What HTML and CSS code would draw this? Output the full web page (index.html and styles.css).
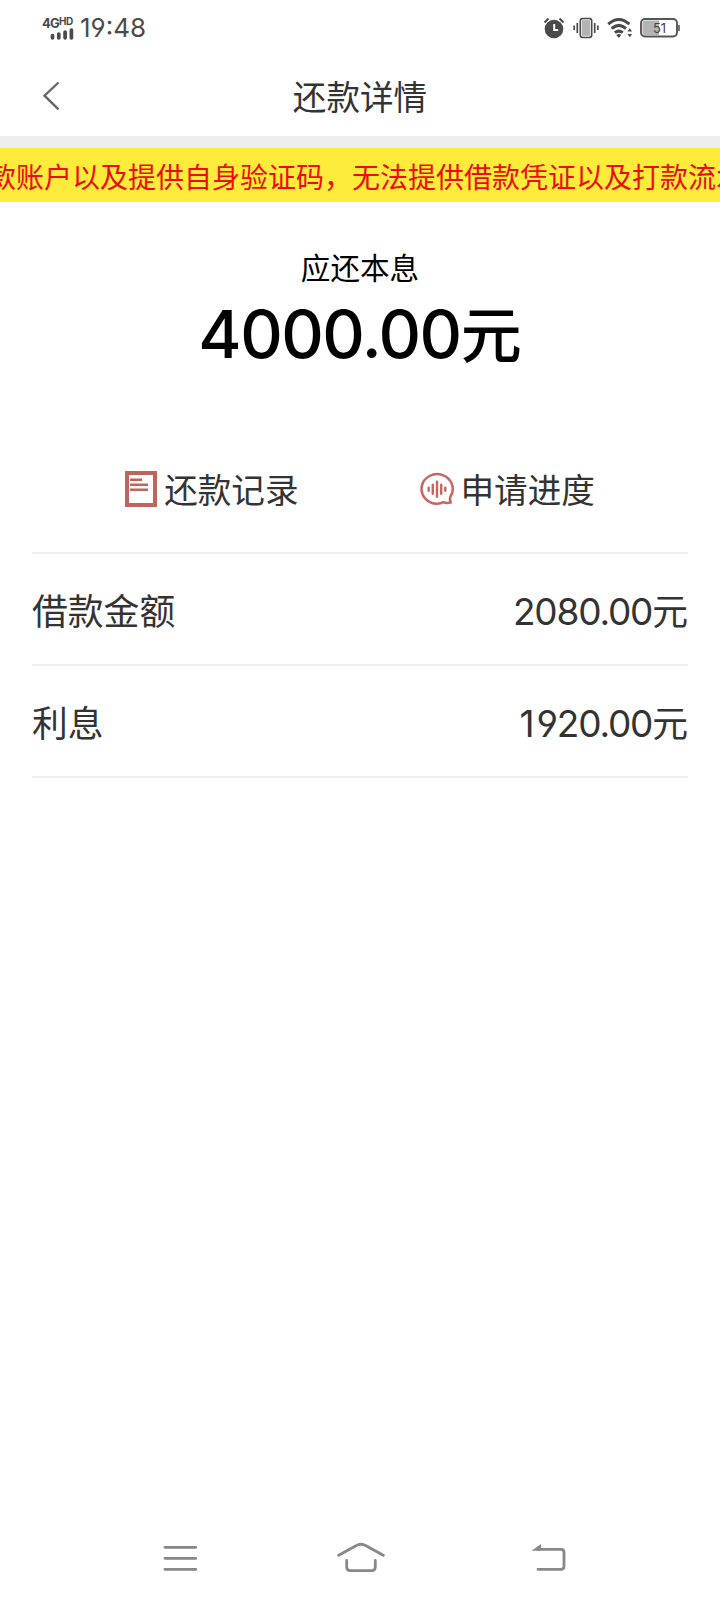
FILE: index.html
```html
<!DOCTYPE html>
<html lang="zh-CN">
  <head>
    <meta charset="UTF-8">
    <meta name="viewport" content="width=device-width, initial-scale=1.0">
    <title>还款详情</title>
    <link rel="stylesheet" href="styles.css">
  </head>
  <body>
    <div class="status-bar">
        <div class="network">
            <div class="network-type">4G<span class="hd">HD</span></div>
            <svg class="signal" width="24" height="12" viewBox="0 0 24 12">
                <path d="M2.500 7.500v2.300M8.800 6v3.800M15.100 4v5.800M21.400 2v7.800" stroke="#4a4a4a" stroke-width="3.700" stroke-linecap="round"/>
            </svg>
        </div>
        <div class="time">19:48</div>
        <div class="status-icons">
            <svg class="alarm" width="22" height="22" viewBox="0 0 22 22">
                <circle cx="11" cy="12" r="9.300" fill="#4a4a4a"/>
                <path d="M1.500 5.500l4-4M20.500 5.500l-4-4" stroke="#4a4a4a" stroke-width="2"/>
                <path d="M11.200 7v6h4" fill="none" stroke="#fff" stroke-width="2"/>
            </svg>
            <svg class="vibrate" width="26" height="22" viewBox="0 0 26 22">
                <rect x="7.500" y="1.700" width="11" height="18.600" rx="2" fill="#b3b3b3" stroke="#4a4a4a" stroke-width="2"/>
                <rect x="8.500" y="2.700" width="9" height="16.600" rx="1" fill="none" stroke="#fff" stroke-width=".8"/>
                <path d="M1.200 8.500v4.500M4.300 6v10M21.700 6v10M24.800 8.500v4.500" stroke="#4a4a4a" stroke-width="1.700"/>
            </svg>
            <svg class="wifi" width="26" height="22" viewBox="0 0 26 22">
                <g fill="none" stroke="#4a4a4a" stroke-width="3">
                    <path d="M1.200 7.200q10.600-9.400 21.200 0"/>
                    <path d="M4.600 11.500q7.200-6.200 14.400 0"/>
                    <path d="M7.900 15.700q3.900-3.200 7.800 0"/>
                </g>
                <path d="M9.300 18q2.500-1.800 5 0L11.800 21z" fill="#4a4a4a"/>
                <path d="M20.500 14.500l2.300-3.200 2.300 3.200zM20.500 17l2.300 3.200 2.300-3.200z" fill="#4a4a4a"/>
            </svg>
            <svg class="battery" width="40" height="22" viewBox="0 0 40 22">
                <rect x="1" y="2" width="36" height="17.500" rx="4" fill="#fff" stroke="#555" stroke-width="1.900"/>
                <path d="M5 3.500h14v14.500H5q-2.500 0-2.500-2.500V6q0-2.500 2.500-2.500z" fill="#b3b3b3"/>
                <path d="M39 8v6" stroke="#555" stroke-width="1.600"/>
                <text class="battery-level" x="19.500" y="15.500" text-anchor="middle">51</text>
            </svg>
        </div>
    </div>

    <div class="header">
        <svg class="back" width="20" height="32" viewBox="0 0 20 32">
            <path d="M16.500 2.500L2.500 15.700 16.500 29.300" fill="none" stroke="#666" stroke-width="2.400"/>
        </svg>
        <h1>还款详情</h1>
    </div>

    <div class="notice">
        <div class="notice-text">款账户以及提供自身验证码，无法提供借款凭证以及打款流水</div>
    </div>

    <div class="summary">
        <div class="summary-label">应还本息</div>
        <div class="summary-amount"><span class="num">4000.00</span>元</div>
    </div>

    <div class="actions">
        <div class="action">
            <svg class="record-icon" width="32" height="36" viewBox="0 0 32 36">
                <rect x="2" y="2" width="28" height="32" fill="none" stroke="#c4625c" stroke-width="4"/>
                <path d="M5 8.700h12M5 13.700h18M5 18.700h18" stroke="#c4625c" stroke-width="2.600"/>
            </svg>
            <span>还款记录</span>
        </div>
        <div class="action">
            <svg class="progress-icon" width="34" height="34" viewBox="1 0 34 34">
                <path d="M31.700 30.500Q27 31.500 24.500 30.100 21.500 31.700 18 31.700A15.600 14.800 0 1 1 31.500 24.500Q30.300 26.500 31.700 30.500z" fill="none" stroke="#cc6460" stroke-width="2.500" stroke-linejoin="round"/>
                <path d="M9.700 15.700v3M13.800 12.700v9M18 9.700v15M22.200 12.700v9M26.300 15.700v3" stroke="#cc6460" stroke-width="2.400" stroke-linecap="round"/>
            </svg>
            <span>申请进度</span>
        </div>
    </div>

    <div class="details">
        <div class="detail-row">
            <span>借款金额</span>
            <span><span class="num">2080.00</span>元</span>
        </div>
        <div class="detail-row">
            <span>利息</span>
            <span><span class="num"><span class="one">1</span>920.00</span>元</span>
        </div>
    </div>

    <div class="nav-bar">
        <svg class="nav-menu" width="34" height="34" viewBox="0 0 34 34">
            <path d="M1.900 6.300h31M1.900 17.300h31M1.900 28.300h31" stroke="#888" stroke-width="2.800" stroke-linecap="round"/>
        </svg>
        <svg class="nav-home" width="48" height="34" viewBox="0 0 48 34">
            <g fill="none" stroke="#888" stroke-width="2.800" stroke-linecap="round" stroke-linejoin="round">
                <path d="M1.700 14.300L19 4.700Q24 1.800 29 4.700L46.300 14.300"/>
                <path d="M9.700 19.500v6.500q0 3.700 3.700 3.700h21.200q3.700 0 3.700-3.700v-6.500"/>
            </g>
        </svg>
        <svg class="nav-back" width="36" height="34" viewBox="0 0 36 34">
            <path d="M7 8.300h23q3 0 3 3v14q0 3-3 3H7" fill="none" stroke="#888" stroke-width="2.800" stroke-linecap="round"/>
            <path d="M.500 9.700L10 3v6.700z" fill="#888"/>
        </svg>
    </div>
  </body>
</html>
```

FILE: styles.css
```css
* {
    box-sizing: border-box;
}

body {
    width: 720px;
    height: 1600px;
    margin: 0;
    display: flex;
    flex-direction: column;
    font-family: 'Noto Sans CJK SC', sans-serif;
    background: #fff;
    color: #333;
    overflow: hidden;
}

svg {
    display: block;
    flex-shrink: 0;
}

.num {
    font-family: Inter, 'Noto Sans CJK SC', sans-serif;
    font-feature-settings: "cv03", "cv04";
}

.status-bar {
    height: 56px;
    padding: 0 40px 0 42px;
    display: flex;
    align-items: center;
}

.network {
    width: 32px;
    height: 25px;
    display: flex;
    flex-direction: column;
    align-items: flex-end;
}

.network-type {
    width: 32px;
    height: 12px;
    font: 700 13px/14px Inter, sans-serif;
    letter-spacing: -0.8px;
    color: #4a4a4a;
    display: flex;
}

.hd {
    font-size: 10px;
    line-height: 11px;
    letter-spacing: -0.3px;
}

.time {
    margin-left: 6px;
    font: 400 26px/56px Inter, sans-serif;
    font-feature-settings: "cv04";
    color: #4a4a4a;
}

.status-icons {
    margin-left: auto;
    display: flex;
    align-items: center;
}

.vibrate {
    margin-left: 8px;
}

.wifi {
    margin-left: 8px;
}

.battery {
    margin-left: 7px;
}

.battery-level {
    font: 400 13px Inter, sans-serif;
    fill: #444;
}

.header {
    height: 80px;
    padding: 0 42px;
    display: grid;
    grid-template-columns: 20px 1fr 20px;
    align-items: center;
}

h1 {
    margin: 0;
    font-size: 33.6px;
    line-height: 80px;
    font-weight: 400;
    text-align: center;
}

.notice {
    height: 66px;
    border-top: 12px solid #eee;
    background: #ffeb3b;
    overflow: hidden;
}

.notice-text {
    margin-left: -12px;
    font-size: 28px;
    line-height: 56px;
    white-space: nowrap;
    color: #ee0c00;
}

.summary {
    padding-top: 42px;
    height: 234px;
    text-align: center;
    color: #000;
}

.summary-label {
    font-size: 29.6px;
    line-height: 45px;
}

.summary-amount {
    font-size: 61px;
    line-height: 86px;
    font-weight: 500;
}

.summary-amount .num {
    font-size: 66px;
    font-weight: 500;
    letter-spacing: -1.5px;
}

.actions {
    height: 116px;
    padding-top: 28px;
    display: flex;
    justify-content: center;
    align-items: flex-start;
    gap: 121px;
    font-size: 33.6px;
    line-height: 50px;
}

.action {
    display: flex;
    align-items: center;
    gap: 7px;
}

.details {
    margin: 0 32px;
    border-top: 2px solid #eee;
}

.detail-row {
    height: 112px;
    display: flex;
    justify-content: space-between;
    border-bottom: 2px solid #eee;
    font-size: 35.8px;
    line-height: 110px;
}

.detail-row .num {
    font-size: 37px;
    letter-spacing: -1.2px;
}

.detail-row .one {
    letter-spacing: 2px;
}

.nav-bar {
    margin-top: auto;
    padding: 0 0 25px 163px;
    display: flex;
}

.nav-home {
    margin-left: 140px;
}

.nav-back {
    margin-left: 146px;
}
```
